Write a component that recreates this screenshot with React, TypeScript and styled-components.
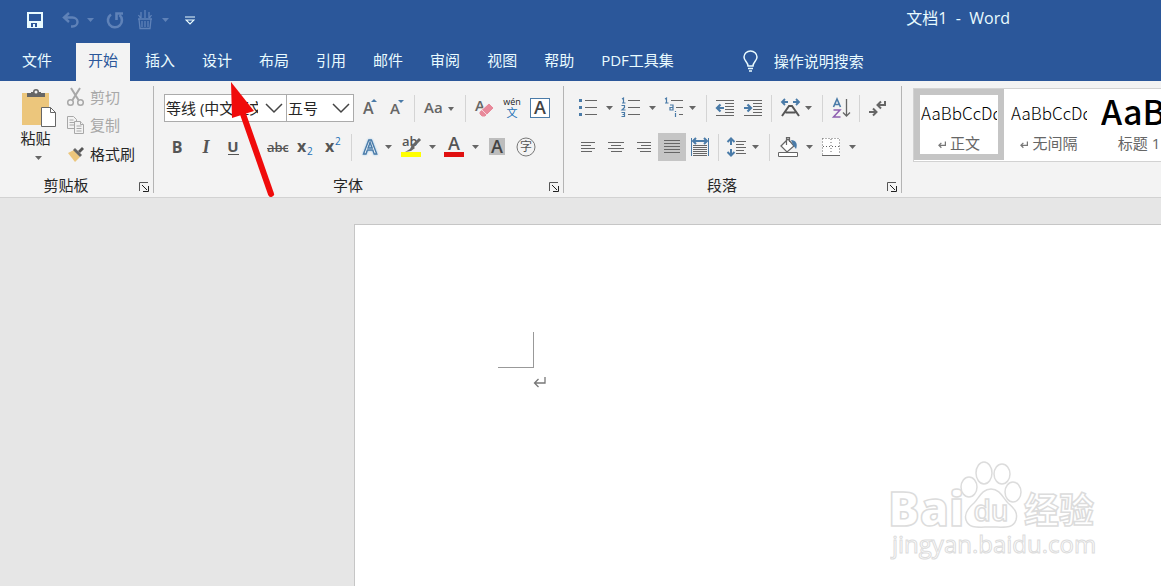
import React from "react";
import styled, { createGlobalStyle, css } from "styled-components";

const ui = `"Open Sans", "Noto Sans CJK SC", sans-serif`;
const blue = "#4a7ba8";
const ink = "#555555";

const Global = createGlobalStyle`
  *, *::before, *::after { box-sizing: border-box; }
  body { margin: 0; font-family: ${ui}; font-size: 15px; color: #262626; }
  button, input, select { font: inherit; color: inherit; border: 0; padding: 0; margin: 0; background: none; }
  svg { display: block; flex: none; }
  svg text { font-family: "Open Sans", "Noto Sans CJK SC", sans-serif; }
`;

const App_ = styled.div`
  position: relative;
  display: flex;
  flex-direction: column;
  min-height: 100vh;
  overflow: hidden;
  background: #e6e6e6;
`;

/* ---------- title bar ---------- */
const TitleBar = styled.header`
  display: flex;
  align-items: center;
  height: 40px;
  padding: 0 151px 0 21px;
  background: #2b579a;
  color: #e9fbff;
`;
const QuickButton = styled.button<{ $w: number; $dim?: boolean }>`
  display: flex;
  align-items: center;
  justify-content: center;
  width: ${(p) => p.$w}px;
  height: 28px;
  color: ${(p) => (p.$dim ? "#5f82b8" : "#e9fbff")};
`;
const Title = styled.h1`
  margin: 0 0 0 auto;
  padding-bottom: 4px;
  font-size: 16px;
  font-weight: 400;
  line-height: 20px;
  white-space: pre;
`;

/* ---------- tab strip ---------- */
const TabStrip = styled.nav`
  display: flex;
  gap: 3px;
  padding: 3px 0 0 10px;
  background: #2b579a;
  color: #e9fbff;
`;
const Tab = styled.button<{ $active?: boolean; $file?: boolean }>`
  height: 38px;
  padding: 0 12px 5px;
  line-height: 20px;
  white-space: nowrap;
  ${(p) => p.$file && css`margin-right: 9px;`}
  ${(p) => p.$active && css`background: #f3f3f3; color: #2b579a;`}
`;
const TellMe = styled.label`
  display: flex;
  align-items: center;
  gap: 15px;
  height: 36px;
  margin-left: 53px;
`;
const TellMeInput = styled.input`
  width: 160px;
  outline: none;
  &::placeholder { color: #e9fbff; opacity: 1; }
`;

/* ---------- ribbon ---------- */
const Ribbon = styled.section`
  display: flex;
  height: 117px;
  padding: 5px 0 4px;
  background: #f3f3f3;
  border-bottom: 1px solid #d2d2d2;
`;
const Group = styled.section<{ $w: number }>`
  display: flex;
  flex: none;
  flex-direction: column;
  justify-content: space-between;
  width: ${(p) => p.$w}px;
  border-right: 1px solid #b4b4b4;
`;
const GroupFooter = styled.footer`
  display: flex;
  align-items: center;
  height: 17px;
  padding-right: 4px;
`;
const GroupName = styled.h2`
  flex: 1;
  margin: 0;
  padding-right: 6px;
  font-size: 15px;
  font-weight: 400;
  line-height: 16px;
  text-align: center;
`;
const Launcher = styled.button`
  width: 10px;
  height: 14px;
`;
const ClipboardBody = styled.div`
  display: flex;
  height: 82px;
`;
const PasteButton = styled.button`
  display: flex;
  flex-direction: column;
  align-items: center;
  width: 64px;
  padding: 2px 0 0 13px;
  line-height: 20px;
`;
const PasteLabel = styled.span`
  margin: 0 6px 8px 0;
`;
const ClipList = styled.div`
  display: flex;
  flex-direction: column;
  margin-top: -3px;
`;
const ClipButton = styled.button<{ $off?: boolean }>`
  display: flex;
  align-items: center;
  gap: 4px;
  height: 29px;
  line-height: 20px;
  color: ${(p) => (p.$off ? "#a8a8a8" : "#262626")};
`;
const ToolRows = styled.div`
  display: flex;
  flex-direction: column;
  gap: 11px;
  padding: 8px 0 0 10px;
`;
const ToolRow = styled.div`
  display: flex;
  align-items: center;
  height: 28px;
`;
const Tool = styled.button<{ $w?: number; $on?: boolean }>`
  display: flex;
  align-items: center;
  justify-content: center;
  flex: none;
  width: ${(p) => p.$w ?? 28}px;
  height: 28px;
  background: ${(p) => (p.$on ? "#c5c5c5" : "transparent")};
`;
const Rule = styled.span<{ $l: number; $r: number }>`
  flex: none;
  width: 1px;
  height: 27px;
  margin: 0 ${(p) => p.$r}px 0 ${(p) => p.$l}px;
  background: #d4d4d4;
`;
const Gap = styled.span<{ $w: number }>`
  flex: none;
  width: ${(p) => p.$w}px;
`;
const Picker = styled.div<{ $w: number }>`
  display: grid;
  align-items: center;
  flex: none;
  width: ${(p) => p.$w}px;
  height: 28px;
  background: #fff;
  border: 1px solid #ababab;
  & + & { border-left: 0; }
  & > * { grid-area: 1 / 1; }
  & > svg { justify-self: end; margin-right: 3px; pointer-events: none; }
`;
const Select = styled.select`
  appearance: none;
  width: 100%;
  height: 26px;
  padding: 0 28px 0 1px;
  outline: none;
`;

/* ---------- style gallery ---------- */
const Gallery = styled.div`
  display: flex;
  flex: 1;
  align-self: flex-start;
  min-width: 0;
  height: 74px;
  margin: 2px 0 0 11px;
  overflow: hidden;
  background: #fff;
  border: 1px solid #d2d2d2;
  border-right: 0;
`;
const StyleCard = styled.button<{ $on?: boolean }>`
  flex: none;
  width: 90px;
  height: 71px;
  padding: 0 1px;
  border: 6px solid ${(p) => (p.$on ? "#c5c5c5" : "transparent")};
`;
const Sample = styled.span<{ $big?: boolean }>`
  display: block;
  overflow: hidden;
  height: 36px;
  line-height: ${(p) => (p.$big ? 32 : 36)}px;
  text-align: left;
  white-space: nowrap;
  color: #000;
  font-family: "Noto Sans CJK SC", sans-serif;
  font-size: ${(p) => (p.$big ? 34 : 17)}px;
  font-weight: ${(p) => (p.$big ? 500 : 300)};
`;
const StyleName = styled.span`
  display: flex;
  align-items: center;
  justify-content: center;
  gap: 4px;
  line-height: 24px;
  white-space: nowrap;
  color: #666;
  & > svg { margin-top: 4px; }
`;

/* ---------- document ---------- */
const Workspace = styled.main`
  display: flex;
  flex: 1;
  padding: 26px 0 0 354px;
`;
const Page = styled.article`
  flex: 1;
  padding: 107px 0 0 143px;
  background: #fff;
  border: 1px solid #c6c6c6;
  border-width: 1px 0 0 1px;
`;
const MarginCorner = styled.div`
  width: 36px;
  height: 36px;
  border: 1px solid #999;
  border-width: 0 1px 1px 0;
`;
const Paragraph = styled.p`
  margin: 0;
  padding: 8px 0 0 35px;
`;
const Watermark = styled.svg`
  position: absolute;
  right: 51px;
  bottom: 16px;
  pointer-events: none;
`;
const Pointer = styled.svg`
  position: absolute;
  left: 224px;
  top: 80px;
  pointer-events: none;
`;

/* ---------- drawings ---------- */
const Caret = ({ color = "#666" }: { color?: string }) => (
  <svg width="7" height="4" viewBox="0 0 7 4"><path d="M0 0h7L3.500 4z" fill={color} /></svg>
);
const Chevron = () => (
  <svg width="18" height="12" viewBox="0 0 18 12"><path d="M1 2l8 8 8-8" fill="none" stroke="#444" strokeWidth="1.500" /></svg>
);
const Art = ({ w = 28, children }: { w?: number; children: React.ReactNode }) => (
  <svg width={w} height="28" viewBox={`0 0 ${w} 28`} fill="none">{children}</svg>
);
const Lines = ({ d, color = "#666" }: { d: string; color?: string }) => (
  <path d={d} stroke={color} strokeWidth="1" shapeRendering="crispEdges" />
);
const Enter = ({ s = 13, color = "#777" }: { s?: number; color?: string }) => (
  <svg width={s} height={s} viewBox="0 0 13 13" fill="none" stroke={color} strokeWidth={s < 10 ? 2 : 1.3}>
    <path d="M12 1v6H1.500M5.500 3l-4 4 4 4" />
  </svg>
);
const LauncherButton = ({ label }: { label: string }) => (
  <Launcher aria-label={label}>
    <svg width="10" height="14" viewBox="0 0 10 14" fill="none" stroke="#555">
      <path d="M.5 13V4.500H9" /><path d="M3 7l5 5" stroke="#222" /><path d="M9.500 8v5.500H4" stroke="#222" />
    </svg>
  </Launcher>
);
const Drop = ({ label, w = 14 }: { label: string; w?: number }) => (
  <Tool $w={w} aria-label={label}><Caret /></Tool>
);
const Foot = ({ name }: { name: string }) => (
  <GroupFooter><GroupName>{name}</GroupName><Gap $w={1} /><LauncherButton label={name + "设置"} /></GroupFooter>
);

const QuickAccess = () => (
  <>
    <QuickButton $w={28} aria-label="保存">
      <svg width="16" height="16" viewBox="0 0 16 16" fill="none">
        <path d="M1 1h14v14H1z" stroke="#e9fbff" strokeWidth="2" />
        <path d="M1 9h14v6H1z" fill="#e9fbff" /><path d="M4 11h8v4H4z" fill="#2b579a" /><path d="M6 12h2v4H6zM10 11h2v5h-2z" fill="#e9fbff" />
      </svg>
    </QuickButton>
    <Gap $w={8} />
    <QuickButton $w={28} $dim aria-label="撤消">
      <svg width="18" height="16" viewBox="0 0 18 16" fill="none" stroke="currentColor" strokeWidth="2.400">
        <path d="M7 1L2 5.500 7 10M2 5.500h8.500a5 4.500 0 0 1 0 9H9" />
      </svg>
    </QuickButton>
    <QuickButton $w={10} $dim aria-label="撤消列表"><Caret color="#5f82b8" /></QuickButton>
    <Gap $w={6} />
    <QuickButton $w={28} $dim aria-label="重复">
      <svg width="18" height="18" viewBox="0 0 18 18" fill="none" stroke="currentColor" strokeWidth="2.600">
        <path d="M5 3.500A7 7 0 1 0 13.500 4M10.500 9V2.500H17" />
      </svg>
    </QuickButton>
    <Gap $w={2} />
    <QuickButton $w={28} $dim aria-label="触摸模式">
      <svg width="16" height="20" viewBox="0 0 16 20" fill="none" stroke="currentColor" strokeWidth="1.300">
        <path d="M2 9l1 9.500h10L14 9M1 9h14M5 11v6M8 11v6M11 11v6M4 2v6M8 0v8M12 2v6M1.500 5l2 3M14.500 5l-2 3" />
      </svg>
    </QuickButton>
    <QuickButton $w={12} $dim aria-label="模式列表"><Caret color="#5f82b8" /></QuickButton>
    <Gap $w={4} />
    <QuickButton $w={30} aria-label="自定义快速访问工具栏">
      <svg width="10" height="9" viewBox="0 0 10 9" fill="none" stroke="#e9fbff" strokeWidth="1.200"><path d="M0 1h10M1 4h8L5 8z" /></svg>
    </QuickButton>
  </>
);

const Clipboard = () => (
  <Group $w={154}>
    <ClipboardBody>
      <PasteButton>
        <svg width="36" height="40" viewBox="0 0 36 40">
          <path d="M1 5h27v32H1z" fill="#ecc67c" />
          <path d="M6 5h4V4h2a3 3 0 0 1 6 0h2v1h4v4H6z" fill="#666" /><circle cx="15" cy="4" r="1.500" fill="#f3f3f3" />
          <path d="M20.500 19.500h9l5 5v14h-14z" fill="#fff" stroke="#666" /><path d="M29.500 19.500v5h5" fill="none" stroke="#666" />
        </svg>
        <PasteLabel>粘贴</PasteLabel>
        <Caret />
      </PasteButton>
      <Gap $w={2} />
      <ClipList>
        <ClipButton $off>
          <svg width="20" height="20" viewBox="0 0 20 20" fill="none" stroke="#a8a8a8">
            <path d="M5 1l7.500 12M14 1L6.500 13" strokeWidth="2" /><circle cx="4.500" cy="15.500" r="2.800" strokeWidth="1.500" /><circle cx="14.500" cy="15.500" r="2.800" strokeWidth="1.500" />
          </svg>
          剪切
        </ClipButton>
        <ClipButton $off>
          <svg width="20" height="20" viewBox="0 0 20 20" fill="#f3f3f3" stroke="#a8a8a8">
            <path d="M1.500 1.500h6l3 3v9h-9zM3.500 5h4M3.500 7.500h5M3.500 10h5" /><path d="M8.500 6.500h6l3 3v9h-9z" /><path d="M14.500 6.500v3h3M10.500 11h5M10.500 13.500h5M10.500 16h5" />
          </svg>
          复制
        </ClipButton>
        <ClipButton>
          <svg width="20" height="20" viewBox="0 0 20 20">
            <path d="M2 9l6-3 6 7-5 5z" fill="#ecc67c" /><path d="M7 6l2-2 7 7-2 2z" fill="#666" /><path d="M12 7l4-4 2 2-4 4z" fill="#555" />
          </svg>
          格式刷
        </ClipButton>
      </ClipList>
    </ClipboardBody>
    <Foot name="剪贴板" />
  </Group>
);

const FontGroup = () => (
  <Group $w={410}>
    <ToolRows>
      <ToolRow>
        <Picker $w={123}><Select aria-label="字体" defaultValue="a"><option value="a">等线 (中文正文)</option></Select><Chevron /></Picker>
        <Picker $w={67}><Select aria-label="字号" defaultValue="5"><option value="5">五号</option></Select><Chevron /></Picker>
        <Gap $w={2} />
        <Tool aria-label="增大字号"><Art><text x="7" y="20" fontSize="16" fontWeight="600" fill="#666">A</text><path d="M15 8h6l-3-3z" fill={blue} /></Art></Tool>
        <Tool aria-label="减小字号"><Art><text x="6" y="20" fontSize="15" fontWeight="600" fill="#666">A</text><path d="M14 6h6l-3 3z" fill={blue} /></Art></Tool>
        <Rule $l={2} $r={2} />
        <Tool $w={46} aria-label="更改大小写"><Art w={46}><text x="7" y="19" fontSize="15" fontWeight="600" fill="#666">Aa</text><path d="M31 13h6l-3 4z" fill="#666" /></Art></Tool>
        <Rule $l={2} $r={4} />
        <Tool aria-label="清除格式"><Art><text x="5" y="17" fontSize="15" fontWeight="600" fill="#666">A</text><path d="M9 18l10-9 5 5-9 9h-3l-3-3z" fill="#e8899a" stroke="#f3f3f3" /><path d="M12 16l5 5" stroke="#f6d3da" /></Art></Tool>
        <Tool aria-label="拼音指南"><Art><text x="14" y="11" fontSize="9" textAnchor="middle" fill="#222">wén</text><text x="14" y="23" fontSize="11" textAnchor="middle" fill="#1b6fb5">文</text></Art></Tool>
        <Tool aria-label="字符边框"><Art><rect x="4.500" y="4.500" width="19" height="19" fill="#fff" stroke={blue} /><text x="14" y="20" fontSize="18" fontWeight="600" textAnchor="middle" fill="#444">A</text></Art></Tool>
      </ToolRow>
      <ToolRow>
        <Tool aria-label="加粗"><Art><text x="13" y="20" fontSize="16" fontWeight="700" textAnchor="middle" fill={ink}>B</text></Art></Tool>
        <Tool aria-label="倾斜"><Art><text x="14" y="20" fontSize="18" fontWeight="700" fontStyle="italic" textAnchor="middle" fill={ink} style={{ fontFamily: "Liberation Serif" }}>I</text></Art></Tool>
        <Tool aria-label="下划线"><Art><text x="13" y="19" fontSize="15" fontWeight="700" textAnchor="middle" fill={ink}>U</text><path d="M8 21.500h11" stroke={ink} /></Art></Tool>
        <Gap $w={15} />
        <Tool aria-label="删除线"><Art><text x="15" y="19" fontSize="13" fontWeight="600" textAnchor="middle" fill={ink}>abc</text><path d="M4 15.500h21" stroke={ink} /></Art></Tool>
        <Tool aria-label="下标"><Art><text x="6" y="19" fontSize="16" fontWeight="700" fill={ink}>x</text><text x="16" y="22" fontSize="10" fill="#1b6fb5">2</text></Art></Tool>
        <Tool aria-label="上标"><Art><text x="6" y="19" fontSize="16" fontWeight="700" fill={ink}>x</text><text x="16" y="12" fontSize="10" fill="#1b6fb5">2</text></Art></Tool>
        <Rule $l={4} $r={5} />
        <Tool $w={24} aria-label="文本效果"><Art w={24}><text x="13" y="21" fontSize="20" fontWeight="600" textAnchor="middle" fill="#fff" stroke={blue} strokeWidth="1.400" style={{ filter: "drop-shadow(0 0 1px #9cc9ec)" }}>A</text></Art></Tool>
        <Drop label="文本效果列表" />
        <Gap $w={2} />
        <Tool aria-label="突出显示"><Art><text x="5" y="13" fontSize="13" fontWeight="600" fill={ink}>ab</text><path d="M23 6l-8 8" stroke="#666" strokeWidth="3" /><path d="M15 12l3 3-4 3-6 1 5-3z" fill="#666" /><path d="M4 19h20v5H4z" fill="#ff0" /></Art></Tool>
        <Drop label="突出显示颜色" />
        <Gap $w={1} />
        <Tool aria-label="字体颜色"><Art><text x="14" y="17" fontSize="18" fontWeight="600" textAnchor="middle" fill={ink}>A</text><path d="M4 19h20v5H4z" fill="#e01010" /></Art></Tool>
        <Drop label="字体颜色列表" />
        <Gap $w={1} />
        <Tool aria-label="字符底纹"><Art><path d="M6 5h16v17H6z" fill="#bdbdbd" /><text x="14" y="20" fontSize="18" fontWeight="600" textAnchor="middle" fill="#444">A</text></Art></Tool>
        <Gap $w={1} />
        <Tool aria-label="带圈字符"><Art><circle cx="14" cy="14" r="9" stroke="#777" /><text x="14" y="18" fontSize="12" textAnchor="middle" fill="#555">字</text></Art></Tool>
      </ToolRow>
    </ToolRows>
    <Foot name="字体" />
  </Group>
);

const ParagraphGroup = () => (
  <Group $w={338}>
    <ToolRows>
      <ToolRow>
        <Tool aria-label="项目符号"><Art><Lines d="M11 6.500h12M11 13.500h12M11 20.500h12" /><path d="M5 5h3v3H5zM5 12h3v3H5zM5 19h3v3H5z" fill={blue} /></Art></Tool>
        <Drop label="项目符号库" />
        <Gap $w={1} />
        <Tool aria-label="编号"><Art><Lines d="M11 6.500h12M11 13.500h12M11 20.500h12" /><path d="M5 5l1.500-1v5M5 9h3.500M4.500 11.500h3v2l-2.500 2.500h3.500M4.500 18.500h3v4h-3M5.500 20.500h2" stroke={blue} strokeWidth="1.200" /></Art></Tool>
        <Drop label="编号库" />
        <Gap $w={2} />
        <Tool $w={24} aria-label="多级列表"><Art w={24}><Lines d="M10 6.500h12M15 13.500h7M18 20.500h4" /><path d="M4 5l1.500-1v5M4 9h3.500M9 11h3v5H9v-2.500h3M14.500 17v1M14.500 19v4" stroke={blue} strokeWidth="1.200" /></Art></Tool>
        <Drop label="列表库" />
        <Rule $l={7} $r={4} />
        <Tool aria-label="减少缩进量"><Art><Lines d="M5 6.500h18M14 9.500h9M14 12.500h9M14 15.500h9M14 18.500h9M5 21.500h18" /><path d="M13 14H6M9.500 10.500L6 14l3.500 3.500" stroke={blue} strokeWidth="2.200" /></Art></Tool>
        <Tool aria-label="增加缩进量"><Art><Lines d="M5 6.500h18M14 9.500h9M14 12.500h9M14 15.500h9M14 18.500h9M5 21.500h18" /><path d="M5 14h7M8.500 10.500L12 14l-3.500 3.500" stroke={blue} strokeWidth="2.200" /></Art></Tool>
        <Rule $l={4} $r={5} />
        <Tool $w={24} aria-label="中文版式"><Art w={24}><path d="M5 22l7-10h3l7 10M8.500 18.500h10" stroke={ink} strokeWidth="2" /><path d="M11 8H5M8 5L5 8l3 3M16 8h6M19 5l3 3-3 3" stroke={blue} strokeWidth="1.800" /></Art></Tool>
        <Drop label="中文版式列表" />
        <Rule $l={7} $r={5} />
        <Tool aria-label="排序"><Art><path d="M5.500 13L9 5l3.500 8M6.500 10.500h5" stroke={blue} strokeWidth="1.600" /><path d="M5.500 16h6.500l-6.500 7H12.500" stroke="#8e5fb0" strokeWidth="1.500" /><path d="M18.500 5v17M15 18.500l3.500 3.500 3.500-3.500" stroke="#666" strokeWidth="1.300" /></Art></Tool>
        <Rule $l={3} $r={3} />
        <Tool aria-label="显示编辑标记"><Art><path d="M22 7v4h-7M18 7.500L14.500 11l3.500 3.500M6 18h7M10 14.500l3.500 3.500-3.500 3.500" stroke="#666" strokeWidth="2" /></Art></Tool>
      </ToolRow>
      <ToolRow>
        <Tool aria-label="左对齐"><Art><Lines d="M7 9.500h14M7 12.500h10M7 15.500h14M7 18.500h11" /></Art></Tool>
        <Tool aria-label="居中"><Art><Lines d="M6 9.500h16M9 12.500h10M6 15.500h16M9 18.500h11" /></Art></Tool>
        <Tool aria-label="右对齐"><Art><Lines d="M7 9.500h14M11 12.500h10M7 15.500h14M10 18.500h11" /></Art></Tool>
        <Tool $on aria-label="两端对齐"><Art><Lines d="M6 7.500h16M6 10.500h16M6 13.500h16M6 16.500h16M6 19.500h16" /></Art></Tool>
        <Tool aria-label="分散对齐"><Art><Lines d="M5.500 5v18M22.500 5v18" color={blue} /><Lines d="M7 12.500h14M7 14.500h14M7 16.500h14M7 18.500h14M7 20.500h14M7 22.500h14" /><path d="M7 8h14M10 5L7 8l3 3M18 5l3 3-3 3" stroke={blue} strokeWidth="2" /></Art></Tool>
        <Rule $l={4} $r={5} />
        <Tool $w={24} aria-label="行距"><Art w={24}><path d="M7 6v6M3.500 9L7 5.500 10.500 9M7 16v6M3.500 19L7 22.500 10.500 19" stroke={blue} strokeWidth="2" /><Lines d="M12 8.500h10M12 11.500h8M12 14.500h10M12 17.500h8M12 20.500h10" /></Art></Tool>
        <Drop label="行距选项" />
        <Rule $l={7} $r={4} />
        <Tool aria-label="底纹"><Art><path d="M7 13l7-7 6 7-7 6zM12.500 12V4.500h3V9" fill="#fff" stroke="#666" strokeWidth="1.200" /><path d="M17 7c5 0 7 4 5 9l-3-4z" fill={blue} /><path d="M4.500 19.500h19v4h-19z" fill="#fff" stroke="#666" /></Art></Tool>
        <Drop label="底纹颜色" />
        <Gap $w={1} />
        <Tool aria-label="边框"><Art><path d="M5 5h18v17H5z" fill="#fff" /><path d="M5.500 5.500h17v16M5.500 5.500v16M14 6v15M6 13.500h16" stroke="#666" strokeDasharray="1 2" /><Lines d="M5 22.500h18" /></Art></Tool>
        <Drop label="边框列表" />
      </ToolRow>
    </ToolRows>
    <Foot name="段落" />
  </Group>
);

const tabs = ["文件", "开始", "插入", "设计", "布局", "引用", "邮件", "审阅", "视图", "帮助", "PDF工具集"];

export default function App() {
  return (
    <App_>
      <Global />
      <TitleBar>
        <QuickAccess />
        <Title>{"文档1  -  Word"}</Title>
      </TitleBar>
      <TabStrip>
        {tabs.map((t, i) => <Tab key={t} $file={i === 0} $active={i === 1}>{t}</Tab>)}
        <TellMe>
          <svg width="17" height="22" viewBox="0 0 17 22" fill="none" stroke="#e9fbff" strokeWidth="1.500">
            <path d="M6 16c0-4-4-5-4-9a6.500 6 0 0 1 13 0c0 4-4 5-4 9zM6 18.500h5M7 21h3" />
          </svg>
          <TellMeInput aria-label="操作说明搜索" placeholder="操作说明搜索" />
        </TellMe>
      </TabStrip>
      <Ribbon>
        <Clipboard />
        <FontGroup />
        <ParagraphGroup />
        <Gallery>
          <StyleCard $on><Sample>AaBbCcDd</Sample><StyleName><Enter s={8} />正文</StyleName></StyleCard>
          <StyleCard><Sample>AaBbCcDd</Sample><StyleName><Enter s={8} />无间隔</StyleName></StyleCard>
          <StyleCard><Sample $big>AaBb</Sample><StyleName>标题 1</StyleName></StyleCard>
        </Gallery>
      </Ribbon>
      <Workspace>
        <Page>
          <MarginCorner />
          <Paragraph><Enter /></Paragraph>
        </Page>
      </Workspace>
      <Watermark width="220" height="110" viewBox="0 0 220 110" fill="#fff" stroke="#dcdcdc" strokeWidth="1.500">
        <text x="-2" y="66" fontSize="47" fontWeight="800">Bai</text>
        <ellipse cx="79" cy="27" rx="8" ry="10" /><ellipse cx="94" cy="13" rx="8" ry="11" />
        <ellipse cx="112" cy="14" rx="8" ry="10" /><ellipse cx="123" cy="32" rx="8" ry="10" />
        <path d="M101 29c-9 0-12 9-17 14-7 6-10 11-8 17 3 9 12 7 25 7s22 2 25-7c2-7-1-11-8-17-5-5-8-14-17-14z" />
        <text x="101" y="61" fontSize="28" fontWeight="600" textAnchor="middle">du</text>
        <text x="134" y="63" fontSize="35" fontWeight="700">经验</text>
        <text x="2" y="93" fontSize="24" strokeWidth="1">jingyan.baidu.com</text>
      </Watermark>
      <Pointer width="56" height="120" viewBox="0 0 56 120">
        <path d="M19 34L47 114" stroke="#f00b0b" strokeWidth="6" strokeLinecap="round" />
        <path d="M7 2l23 29-22 7z" fill="#f00b0b" />
      </Pointer>
    </App_>
  );
}
